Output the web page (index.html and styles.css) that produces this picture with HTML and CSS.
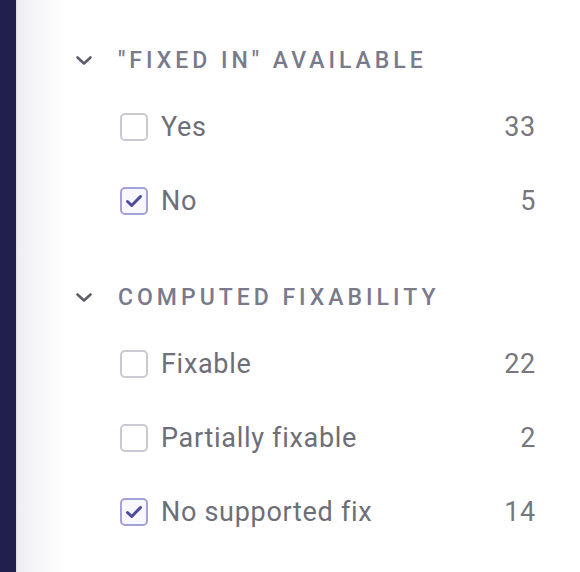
FILE: index.html
```html
<!DOCTYPE html>
<html lang="en">
<head>
  <meta charset="UTF-8" />
  <title>Filters</title>
  <link rel="stylesheet" href="styles.css">
</head>
<body>
  <div class="layout">
    <!-- Dark navigation rail -->
    <div class="rail"></div>

    <!-- Filter panel -->
    <aside class="filters">
      <section class="filter-group">
        <div class="filter-group__header">
          <svg class="chevron" width="18" height="11" viewBox="0 0 18 11"><path d="M2.5 2.5l6.5 6 6.5-6" fill="none" stroke="currentColor" stroke-width="2.6" stroke-linecap="round" stroke-linejoin="round"/></svg>
          <span class="filter-group__title">"Fixed in" available</span>
        </div>
        <ul class="filter-group__list">
          <li class="option">
            <span class="checkbox"></span>
            <span class="option__label">Yes</span>
            <span class="option__count">33</span>
          </li>
          <li class="option">
            <span class="checkbox checkbox--checked">
              <svg width="22" height="22" viewBox="0 0 22 22"><path d="M4.5 11.5l4.2 4L17.5 6.5" fill="none" stroke="currentColor" stroke-width="3" stroke-linecap="round" stroke-linejoin="round"/></svg>
            </span>
            <span class="option__label">No</span>
            <span class="option__count">5</span>
          </li>
        </ul>
      </section>

      <section class="filter-group">
        <div class="filter-group__header">
          <svg class="chevron" width="18" height="11" viewBox="0 0 18 11"><path d="M2.5 2.5l6.5 6 6.5-6" fill="none" stroke="currentColor" stroke-width="2.6" stroke-linecap="round" stroke-linejoin="round"/></svg>
          <span class="filter-group__title">Computed fixability</span>
        </div>
        <ul class="filter-group__list">
          <li class="option">
            <span class="checkbox"></span>
            <span class="option__label">Fixable</span>
            <span class="option__count">22</span>
          </li>
          <li class="option">
            <span class="checkbox"></span>
            <span class="option__label">Partially fixable</span>
            <span class="option__count">2</span>
          </li>
          <li class="option">
            <span class="checkbox checkbox--checked">
              <svg width="22" height="22" viewBox="0 0 22 22"><path d="M4.5 11.5l4.2 4L17.5 6.5" fill="none" stroke="currentColor" stroke-width="3" stroke-linecap="round" stroke-linejoin="round"/></svg>
            </span>
            <span class="option__label">No supported fix</span>
            <span class="option__count">14</span>
          </li>
        </ul>
      </section>
    </aside>
  </div>
</body>
</html>
```
FILE: styles.css
```css
/* Page */
body {
  margin: 0;
  font-family: Roboto, "Liberation Sans", sans-serif;
  background: #fff;
}
.layout {
  display: flex;
  min-height: 100vh;
}
.rail {
  width: 16px;
  flex-shrink: 0;
  background: #211f4e;
}
/* Filter panel with soft inner shadow next to the rail */
.filters {
  flex: 1;
  padding: 40px 44px 0 60px;
  background: linear-gradient(90deg, #d9d9e2 0, #eeeef3 2px, #f5f5f8 18px, #fff 50px);
}
.filter-group {
  margin-bottom: 39px;
}
.filter-group__header {
  display: flex;
  align-items: center;
  height: 40px;
  margin-bottom: 10px;
  color: #5d5d6c;
}
.chevron {
  margin-left: -1px;
  margin-right: 25px;
}
.filter-group__title {
  font-size: 23px;
  font-weight: 500;
  letter-spacing: 4px;
  text-transform: uppercase;
  color: #7a7a8d;
}
.filter-group__list {
  list-style: none;
  margin: 0;
  padding: 0 0 0 44px;
}
/* Options */
.option {
  display: flex;
  align-items: center;
  height: 74px;
  font-size: 27px;
  letter-spacing: 0.7px;
  color: #6e6e78;
}
.option__label {
  flex: 1;
}
.option__count {
  color: #777780;
}
.checkbox {
  display: flex;
  align-items: center;
  justify-content: center;
  box-sizing: border-box;
  width: 28px;
  height: 28px;
  margin-right: 13px;
  border: 2px solid #c9c9d3;
  border-radius: 5px;
}
.checkbox--checked {
  border-color: #a3a1d8;
  background: #f8f7fd;
  color: #4d4a9e;
}
```
